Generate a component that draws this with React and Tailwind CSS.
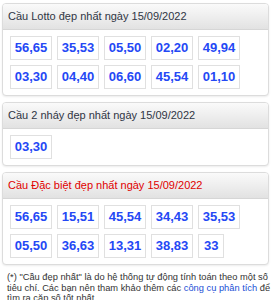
const lotto = ["56,65", "35,53", "05,50", "02,20", "49,94", "03,30", "04,40", "06,60", "45,54", "01,10"];
const nhay = ["03,30"];
const dacBiet = ["56,65", "15,51", "45,54", "34,43", "35,53", "05,50", "36,63", "13,31", "38,83", "33"];

function Card({ title, red, items }) {
  return (
    <div className="mb-[6px] rounded-[4px] border border-[#dcdcdc] bg-white shadow-[0_1px_2px_rgba(0,0,0,0.08)] overflow-hidden">
      <div
        className={
          "h-[26px] flex items-center px-[5px] border-b border-[#d6d6d6] bg-gradient-to-b from-[#fafafa] to-[#e2e2e2] text-[11px] " +
          (red ? "text-[#e00000]" : "text-[#2f3544]")
        }
      >
        {title}
      </div>
      <div className="flex flex-wrap gap-[5px] pl-[7px] pr-[4px] pt-[6px] pb-[6px]">
        {items.map((n, i) => (
          <div
            key={i}
            className="h-[24px] min-w-[24px] px-[5px] flex items-center justify-center border border-[#e0e0e0] text-[13px] font-bold text-[#2448f5]"
            style={{ width: n.length > 2 ? 42 : undefined }}
          >
            {n}
          </div>
        ))}
      </div>
    </div>
  );
}

export default function App() {
  return (
    <div className="w-[271px] h-[300px] overflow-hidden bg-white px-[2px] pt-[3px] font-['Liberation_Sans',Arial,sans-serif]">
      <Card title="Cầu Lotto đẹp nhất ngày 15/09/2022" items={lotto} />
      <Card title="Cầu 2 nháy đẹp nhất ngày 15/09/2022" items={nhay} />
      <Card title="Cầu Đặc biệt đẹp nhất ngày 15/09/2022" red items={dacBiet} />
      <p className="pl-[5px] -mr-[2px] pt-[1px] text-[9.3px] leading-[10.5px] text-[#333]">
        (*) "Cầu đẹp nhất" là do hệ thống tự động tính toán theo một số tiêu chí. Các bạn nên tham khảo thêm các{" "}
        <span className="text-[#1a4fd6]">công cụ phân tích</span> để tìm ra cặp số tốt nhất.
      </p>
    </div>
  );
}
